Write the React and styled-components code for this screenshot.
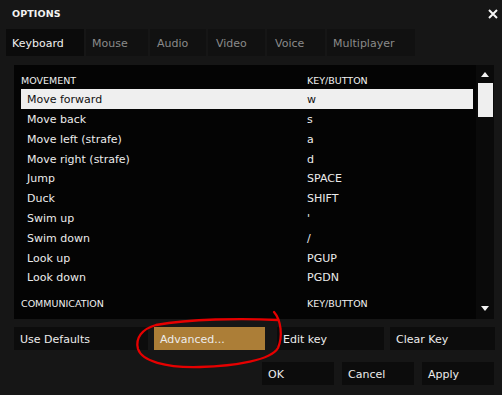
import React from "react";
import styled, { createGlobalStyle } from "styled-components";

const Global = createGlobalStyle`
  html, body { margin: 0; padding: 0; background: #161616; }
  body { font-family: "DejaVu Sans", Verdana, sans-serif; }
`;

const Window = styled.div`
  position: relative;
  width: 502px;
  height: 395px;
  background: #161616;
  overflow: hidden;
  color: #ececec;
  font-size: 11px;
`;

const TitleBar = styled.div`
  height: 27px;
  display: flex;
  align-items: center;
  justify-content: space-between;
  padding: 0 4px 0 12px;
`;

const Title = styled.div`
  font-weight: bold;
  font-size: 9.5px;
  color: #f2f2f2;
  letter-spacing: 0.1px;
`;

const Close = styled.svg`
  width: 10px;
  height: 10px;
  margin-top: 1px;
`;

const Tabs = styled.div`
  display: flex;
  gap: 2px;
  margin-top: 2px;
  padding-left: 6px;
  height: 27px;
`;

const Tab = styled.div`
  width: ${(p) => p.$w}px;
  box-sizing: border-box;
  padding-left: ${(p) => p.$pl || 6}px;
  padding-top: 1px;
  display: flex;
  align-items: center;
  background: ${(p) => (p.$active ? "#0b0b0b" : "#111111")};
  color: ${(p) => (p.$active ? "#f0f0f0" : "#8a8a8a")};
  font-size: 11px;
`;

const Panel = styled.div`
  margin: 9px 8px 0 14px;
  height: 254px;
  display: flex;
  background: #040404;
`;

const List = styled.div`
  flex: 1;
  padding: 0 3px 0 7px;
  overflow: hidden;
`;

const Header = styled.div`
  display: grid;
  grid-template-columns: 286px 1fr;
  height: ${(p) => p.$h}px;
  padding-top: ${(p) => p.$pt}px;
  box-sizing: border-box;
  font-size: 9.5px;
  color: #f0f0f0;
  line-height: 12px;
`;

const Row = styled.div`
  display: grid;
  grid-template-columns: 280px 1fr;
  height: 19.8px;
  box-sizing: border-box;
  padding-top: 1.5px;
  align-items: center;
  padding-left: 6px;
  background: ${(p) => (p.$selected ? "#efefef" : "transparent")};
  color: ${(p) => (p.$selected ? "#101010" : "#ececec")};
`;

const Scrollbar = styled.div`
  width: 18px;
  background: #0a0a0a;
  display: flex;
  flex-direction: column;
  align-items: center;
`;

const Arrow = styled.svg`
  width: 8px;
  height: 5px;
  margin-top: ${(p) => p.$mt}px;
  margin-bottom: ${(p) => p.$mb || 0}px;
`;

const Thumb = styled.div`
  width: 15px;
  height: 34px;
  margin-top: 6px;
  background: #efefef;
`;

const Spacer = styled.div`
  flex: 1;
`;

const ButtonRow = styled.div`
  display: flex;
  margin: ${(p) => p.$mt}px 0 0 ${(p) => p.$ml}px;
  height: 23px;
`;

const Button = styled.div`
  width: ${(p) => p.$w}px;
  margin-left: ${(p) => p.$gap || 0}px;
  box-sizing: border-box;
  padding-left: 6px;
  padding-top: 1px;
  display: flex;
  align-items: center;
  background: ${(p) => (p.$accent ? "#ac7e37" : "#0c0c0c")};
  color: #ececec;
  font-size: 11px;
`;

const Annotation = styled.svg`
  position: absolute;
  left: 0;
  top: 0;
  width: 502px;
  height: 395px;
  pointer-events: none;
`;

const rows = [
  ["Move forward", "w"],
  ["Move back", "s"],
  ["Move left (strafe)", "a"],
  ["Move right (strafe)", "d"],
  ["Jump", "SPACE"],
  ["Duck", "SHIFT"],
  ["Swim up", "'"],
  ["Swim down", "/"],
  ["Look up", "PGUP"],
  ["Look down", "PGDN"],
];

export default function App() {
  return (
    <Window>
      <Global />
      <TitleBar>
        <Title>OPTIONS</Title>
        <Close viewBox="0 0 10 10">
          <path d="M1 1 L9 9 M9 1 L1 9" stroke="#f4f4f4" strokeWidth="2" />
        </Close>
      </TitleBar>
      <Tabs>
        <Tab $active $w={78}>Keyboard</Tab>
        <Tab $w={62}>Mouse</Tab>
        <Tab $w={56} $pl={7}>Audio</Tab>
        <Tab $w={57} $pl={8}>Video</Tab>
        <Tab $w={58} $pl={8}>Voice</Tab>
        <Tab $w={88} $pl={6}>Multiplayer</Tab>
      </Tabs>
      <Panel>
        <List>
          <Header $h={24} $pt={10}>
            <span>MOVEMENT</span>
            <span>KEY/BUTTON</span>
          </Header>
          {rows.map(([a, k], i) => (
            <Row key={a} $selected={i === 0}>
              <span>{a}</span>
              <span>{k}</span>
            </Row>
          ))}
          <Header $h={32} $pt={11}>
            <span>COMMUNICATION</span>
            <span>KEY/BUTTON</span>
          </Header>
        </List>
        <Scrollbar>
          <Arrow $mt={7} viewBox="0 0 8 5">
            <path d="M4 0 L8 5 L0 5 Z" fill="#f2f2f2" />
          </Arrow>
          <Thumb />
          <Spacer />
          <Arrow $mt={0} $mb={8} viewBox="0 0 8 5">
            <path d="M0 0 L8 0 L4 5 Z" fill="#f2f2f2" />
          </Arrow>
        </Scrollbar>
      </Panel>
      <ButtonRow $mt={8} $ml={14}>
        <Button $w={134}>Use Defaults</Button>
        <Button $w={111} $gap={6} $accent>Advanced...</Button>
        <Button $w={107} $gap={12}>Edit key</Button>
        <Button $w={105} $gap={6}>Clear Key</Button>
      </ButtonRow>
      <ButtonRow $mt={12} $ml={262}>
        <Button $w={72}>OK</Button>
        <Button $w={72} $gap={8}>Cancel</Button>
        <Button $w={72} $gap={8}>Apply</Button>
      </ButtonRow>
      <Annotation viewBox="0 0 502 395">
        <path
          d="M274 312 C281 320 283 336 278 348 C271 360 236 366 200 367 C165 368 142 361 138 349 C135 338 142 329 156 325 C190 319 240 318 278 320"
          fill="none"
          stroke="#e60000"
          strokeWidth="2.3"
          strokeLinecap="round"
        />
      </Annotation>
    </Window>
  );
}
